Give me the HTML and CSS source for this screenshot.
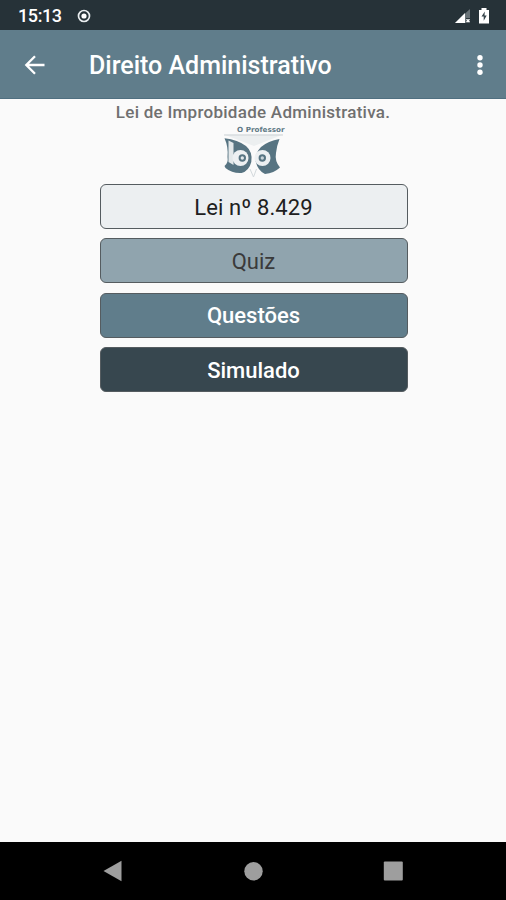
FILE: index.html
```html
<!DOCTYPE html>
<html lang="pt-BR">
<head>
<meta charset="utf-8">
<title>Direito Administrativo</title>
<link rel="stylesheet" href="styles.css">
</head>
<body>
<div class="status">
  <span class="clock">15:13</span>
  <svg class="record" viewBox="0 0 14 14"><circle cx="7" cy="7" r="5.500" fill="none" stroke="#e9edef" stroke-width="1.700"/><circle cx="7" cy="7" r="2.600" fill="#fff"/></svg>
  <svg class="signal" viewBox="0 0 16 16"><path d="M15 1v9h-4v5H0z" fill="#697378"/><path d="M10 5v10H0z" fill="#fff"/><path d="M11.500 11.200l3 3m0-3l-3 3" stroke="#fff" stroke-width="1.500"/></svg>
  <svg class="battery" viewBox="0 0 12 16"><path d="M3.500 0h5v2H11v13.500H1V2h2.500z" fill="#fff"/><path d="M6.800 3.500L3.500 8.500h2.200v4.200l3-5.200H6.500z" fill="#35434a"/></svg>
</div>
<header class="appbar">
  <svg class="back" viewBox="0 0 22 20"><path d="M20.500 10H2.500M11 1.300L2.300 10l8.700 8.700" fill="none" stroke="#fff" stroke-width="2.300"/></svg>
  <h1 class="title">Direito Administrativo</h1>
  <svg class="more" viewBox="0 0 6 20"><circle cx="3" cy="2.700" r="2.700"/><circle cx="3" cy="10" r="2.700"/><circle cx="3" cy="17.300" r="2.700"/></svg>
</header>
<main class="content">
  <h2 class="subject">Lei de Improbidade Administrativa.</h2>
  <svg class="logo" viewBox="0 0 66 58">
    <text x="17" y="7" textLength="47.500" lengthAdjust="spacingAndGlyphs" class="brand">O Professor</text>
    <path d="M4 9.500h59L34 21z" fill="#eceff0"/>
    <path d="M4 10h59" stroke="#cdd3d6" stroke-width="1"/>
    <path d="M4.500 13.300Q18 15 26 21Q33 27 31.300 37Q29 46 21.500 48Q12 48.500 5.500 43L4.500 41Q8.500 38 7.500 32Q8.500 22 4.500 13.300z" fill="#577482"/>
    <path d="M59.500 14Q48 16 41 22Q35 28 35.500 36Q38 46 45 49Q54 48 60 42.500Q54.500 36 56 28Q57 20 59.500 14z" fill="#577482"/>
    <path d="M8.500 15.500l5 2.500v22l-5-3z" fill="#e3e8ea"/>
    <circle cx="20.500" cy="33" r="8" fill="#edf0f2"/>
    <circle cx="42.500" cy="33" r="8" fill="#edf0f2"/>
    <circle cx="22.300" cy="33" r="2.700" fill="#e2e8eb" stroke="#577482" stroke-width="2"/>
    <circle cx="42.300" cy="33" r="2.700" fill="#c9d3d8" stroke="#577482" stroke-width="2"/>
    <path d="M30 44l3.500 8 3-8" fill="none" stroke="#d3d9dc" stroke-width="1"/>
  </svg>
  <nav class="menu">
    <button class="item law">Lei nº 8.429</button>
    <button class="item quiz">Quiz</button>
    <button class="item questions">Questões</button>
    <button class="item exam">Simulado</button>
  </nav>
</main>
<footer class="navbar">
  <svg class="key" viewBox="0 0 22 22"><path d="M1.500 11L19.500 .8v20.400z"/></svg>
  <svg class="key" viewBox="0 0 22 22"><circle cx="11.500" cy="11.300" r="9.200"/></svg>
  <svg class="key" viewBox="0 0 22 22"><rect x="1.800" y="1.500" width="19" height="19" rx="1"/></svg>
</footer>
</body>
</html>
```
FILE: styles.css
```css
* { box-sizing: border-box; }
body {
  margin: 0;
  height: 900px;
  display: flex;
  flex-direction: column;
  overflow: hidden;
  background: #fafafa;
  font-family: Roboto, "Liberation Sans", sans-serif;
}
.status {
  height: 30px;
  flex: none;
  display: flex;
  align-items: center;
  padding: 1px 16px 0 18px;
  background: #263238;
}
.clock { color: #fff; font-size: 18px; font-weight: 500; width: 59px; letter-spacing: -0.4px; }
.record { width: 14px; height: 14px; }
.signal { width: 16px; height: 16px; margin-left: auto; margin-right: 7px; }
.battery { width: 12px; height: 16px; }
.appbar {
  height: 69px;
  flex: none;
  display: flex;
  align-items: center;
  padding: 1px 23px 0 24px;
  background: #607d8b;
  border-bottom: 1px solid #4f6f80;
}
.back { width: 22px; height: 20px; }
.title { margin: 2px 0 0 43px; color: #fff; font-size: 25px; line-height: 30px; font-weight: 500; white-space: nowrap; }
.more { width: 6px; height: 20px; margin-left: auto; fill: #fff; }
.content { flex: 1; display: flex; flex-direction: column; align-items: center; }
.subject { margin: 2px 0 0; height: 22px; line-height: 22px; font-size: 17px; font-weight: 500; color: #707070; letter-spacing: 0.27px; white-space: nowrap; }
.logo { width: 66px; height: 58px; margin-top: 2px; overflow: visible; }
.brand { font: bold 7px "DejaVu Sans", sans-serif; fill: #607985; }
.menu { width: 308px; margin: 1px 0 0 1px; display: flex; flex-direction: column; gap: 9.4px; }
.item {
  height: 45px;
  padding: 2px 0 0;
  border: 1px solid #555c60;
  border-radius: 6px;
  font-family: inherit;
  font-size: 22px;
  line-height: 26px;
}
.law { background: #eceff1; color: #202020; letter-spacing: 0.1px; }
.quiz { background: #90a4ae; color: #3a3a3a; }
.questions { background: #607d8b; color: #fff; font-weight: 500; }
.exam { background: #37474f; color: #fff; font-weight: 500; }
.navbar {
  height: 58px;
  flex: none;
  display: flex;
  justify-content: space-between;
  align-items: center;
  padding: 0 102px;
  background: #000;
}
.key { width: 22px; height: 22px; fill: #9e9e9e; }
```
